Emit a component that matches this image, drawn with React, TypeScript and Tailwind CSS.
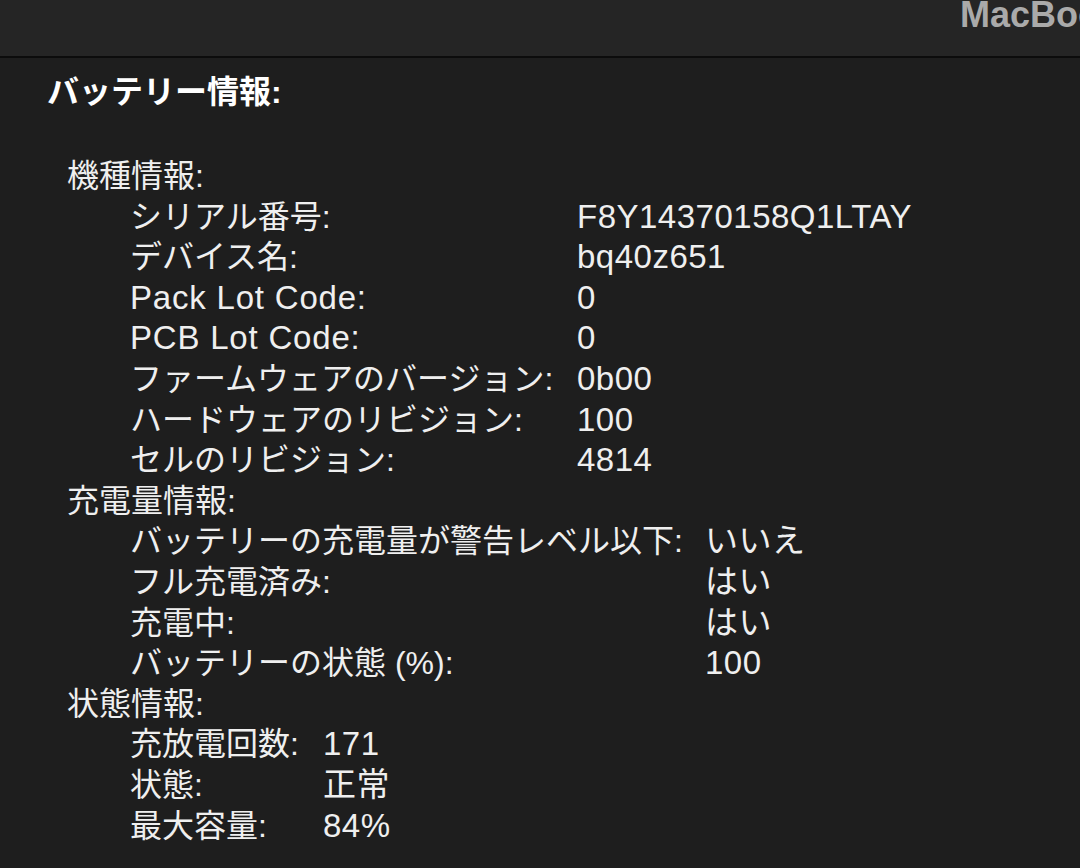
import React from 'react';

type Row = { label: string; value: string; latin?: boolean };
type Group = { title: string; labelWidth: string; rows: Row[] };

const groups: Group[] = [
  {
    title: '機種情報:',
    labelWidth: 'grid-cols-[447px_1fr]',
    rows: [
      { label: 'シリアル番号:', value: 'F8Y14370158Q1LTAY' },
      { label: 'デバイス名:', value: 'bq40z651' },
      { label: 'Pack Lot Code:', value: '0', latin: true },
      { label: 'PCB Lot Code:', value: '0', latin: true },
      { label: 'ファームウェアのバージョン:', value: '0b00' },
      { label: 'ハードウェアのリビジョン:', value: '100' },
      { label: 'セルのリビジョン:', value: '4814' },
    ],
  },
  {
    title: '充電量情報:',
    labelWidth: 'grid-cols-[575px_1fr]',
    rows: [
      { label: 'バッテリーの充電量が警告レベル以下:', value: 'いいえ' },
      { label: 'フル充電済み:', value: 'はい' },
      { label: '充電中:', value: 'はい' },
      { label: 'バッテリーの状態 (%):', value: '100' },
    ],
  },
  {
    title: '状態情報:',
    labelWidth: 'grid-cols-[193px_1fr]',
    rows: [
      { label: '充放電回数:', value: '171' },
      { label: '状態:', value: '正常' },
      { label: '最大容量:', value: '84%' },
    ],
  },
];

const App: React.FC = () => {
  return (
    <div className="w-[1080px] h-[868px] overflow-hidden flex bg-[#1e1e1e] font-['Liberation_Sans','Noto_Sans_CJK_JP',sans-serif] text-[#efefef]">
      <div className="flex-1 flex flex-col">
        <header className="h-[58px] bg-[#252525] flex overflow-hidden border-b-2 border-[#0c0c0c]">
          <span className="ml-[960px] text-[36px] font-bold text-[#aaaaaa] leading-none -mt-[3px] whitespace-nowrap">MacBook</span>
        </header>

        <main className="pl-[47px] pt-[14px]">
          <h1 className="text-[32px] font-bold leading-[40px] text-white">バッテリー情報:</h1>

          <div className="mt-[44px] pl-[20px] text-[32px] leading-[40.6px]">
            {groups.map(group => (
              <section key={group.title}>
                <h2>{group.title}</h2>
                <div className="pl-[63px]">
                  {group.rows.map(row => (
                    <div key={row.label} className={`grid ${group.labelWidth}`}>
                      <span className={row.latin ? 'whitespace-nowrap text-[33px] tracking-[0.8px]' : 'whitespace-nowrap'}>{row.label}</span>
                      <span className="whitespace-nowrap text-[33px] tracking-[0.5px]">{row.value}</span>
                    </div>
                  ))}
                </div>
              </section>
            ))}
          </div>
        </main>
      </div>
      <div className="w-[5px] bg-[#0a0a0a]" />
    </div>
  );
};

export default App;
